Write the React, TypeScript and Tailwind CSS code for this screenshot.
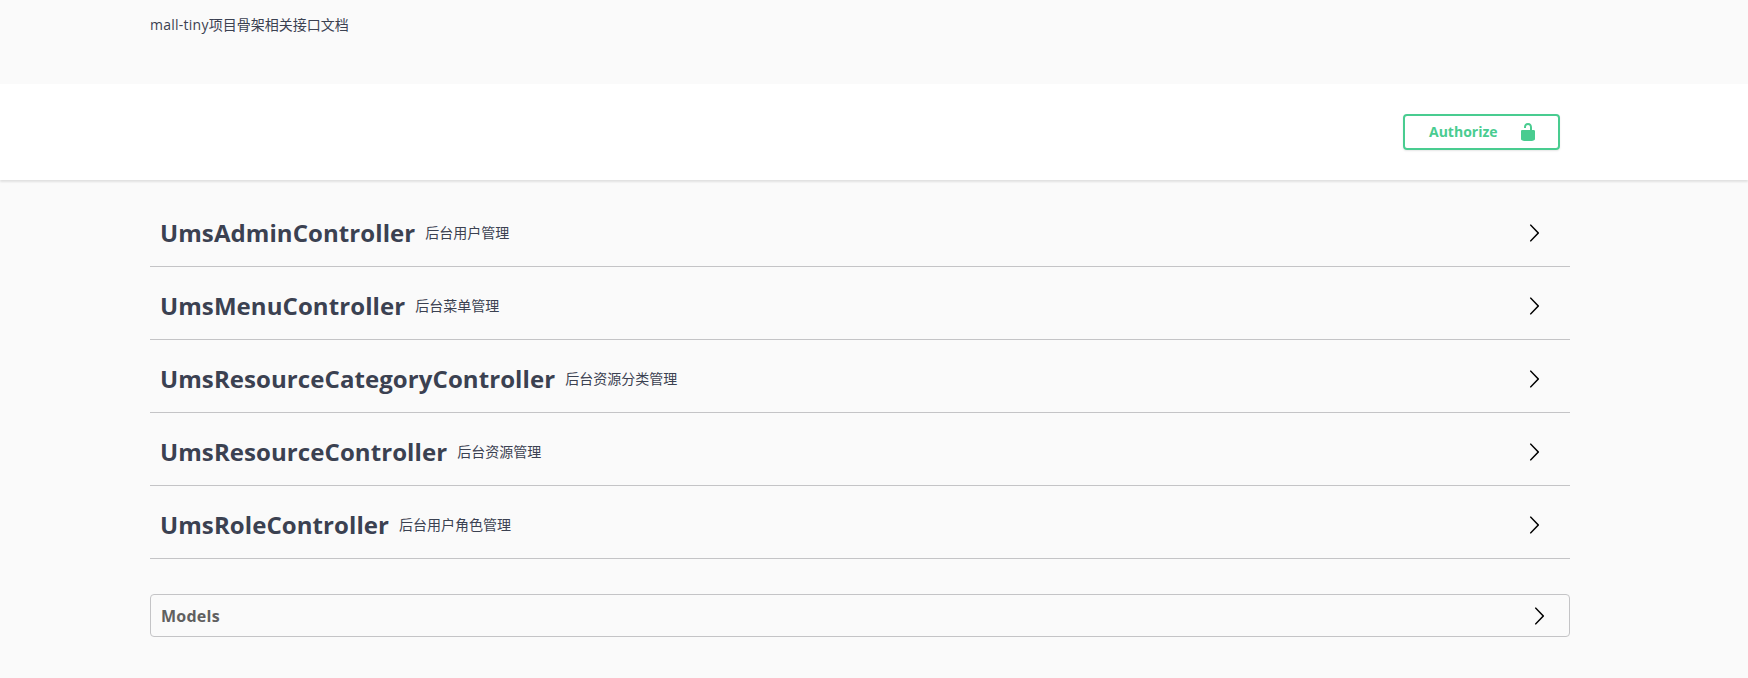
const FONT = "font-['Open_Sans','Noto_Sans_CJK_SC',sans-serif]"

const tags = [
  { name: "UmsAdminController", desc: "后台用户管理" },
  { name: "UmsMenuController", desc: "后台菜单管理" },
  { name: "UmsResourceCategoryController", desc: "后台资源分类管理" },
  { name: "UmsResourceController", desc: "后台资源管理" },
  { name: "UmsRoleController", desc: "后台用户角色管理" },
]

const Arrow = () => (
  <svg width="20" height="20" viewBox="0 0 20 20" fill="currentColor" className="text-black">
    <path d="M13.25 10L6.109 2.58c-.268-.27-.268-.707 0-.979.268-.27.701-.27.969 0l7.83 7.908c.268.271.268.709 0 .979l-7.83 7.908c-.268.271-.701.27-.969 0-.268-.269-.268-.707 0-.979L13.25 10z" />
  </svg>
)

const Lock = () => (
  <svg width="20" height="20" viewBox="0 0 20 20" fill="currentColor">
    <path d="M15.8 8H14V5.6C14 2.703 12.665 1 10 1 7.334 1 6 2.703 6 5.6V6h2v-.801C8 3.754 8.797 3 10 3c1.203 0 2 .754 2 2.199V8H4c-.553 0-1 .646-1 1.199V17c0 .549.428 1.139.951 1.307l1.197.387C5.672 18.861 6.55 19 7.1 19h5.8c.549 0 1.428-.139 1.951-.307l1.196-.387c.524-.167.953-.757.953-1.306V9.199C17 8.646 16.352 8 15.8 8z" />
  </svg>
)

export default function App() {
  return (
    <div className={`h-[678px] overflow-hidden bg-[#fafafa] text-[#3b4151] ${FONT}`}>
      <div className="h-[84px] px-[150px] pt-[15px] text-sm leading-[20px]">
        <span className="tracking-[0.25px]">mall-tiny</span>项目骨架相关接口文档
      </div>

      <div className="flex h-[96px] items-center justify-end bg-white pr-[188px] shadow-[0_2px_2px_0_rgba(0,0,0,0.1)]">
        <button className="flex h-[36px] w-[157px] items-center rounded-[4px] border-2 border-[#49cc90] pr-[20px] pl-[24px] text-sm font-bold text-[#49cc90] shadow-[0_1px_2px_rgba(0,0,0,0.1)]">
          <span className="flex-1 text-left">Authorize</span>
          <Lock />
        </button>
      </div>

      <div className="mr-[178px] ml-[150px] pt-[14px]">
        {tags.map((t) => (
          <div key={t.name} className="flex h-[73px] items-center border-b border-[#c4c4c6] pt-[6px] pr-[26px] pl-[10px]">
            <span className="text-2xl leading-[30px] font-bold tracking-[0.08px]">{t.name}</span>
            <span className="ml-[10px] flex-1 text-sm leading-[20px]">{t.desc}</span>
            <Arrow />
          </div>
        ))}

        <div className="mt-[35px] flex h-[43px] items-center rounded-[4px] border border-[#c4c4c6] pr-[20px] pl-[10px]">
          <span className="flex-1 text-base font-bold tracking-[0.25px] text-[#606060]">Models</span>
          <Arrow />
        </div>
      </div>
    </div>
  )
}
